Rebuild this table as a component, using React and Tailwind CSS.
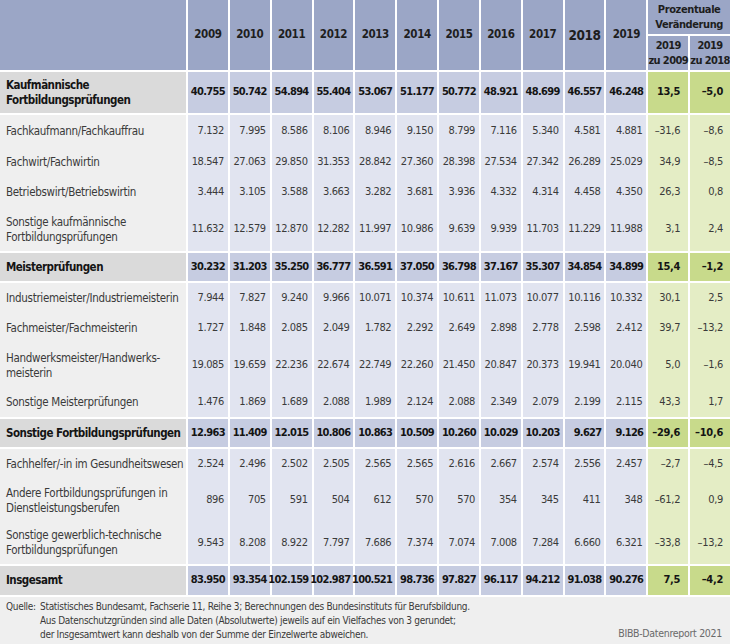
const years = ['2009', '2010', '2011', '2012', '2013', '2014', '2015', '2016', '2017', '2018', '2019'];

// kind: b = summary row, l = detail row; h = row height in px
const rows = [
  { kind: 'b', h: 'h-[41px]', label: ['Kaufmännische', 'Fortbildungsprüfungen'], values: ['40.755', '50.742', '54.894', '55.404', '53.067', '51.177', '50.772', '48.921', '48.699', '46.557', '46.248'], p1: '13,5', p2: '–5,0' },
  { kind: 'l', h: 'h-[32px]', label: ['Fachkaufmann/Fachkauffrau'], values: ['7.132', '7.995', '8.586', '8.106', '8.946', '9.150', '8.799', '7.116', '5.340', '4.581', '4.881'], p1: '–31,6', p2: '–8,6' },
  { kind: 'l', h: 'h-[30px]', label: ['Fachwirt/Fachwirtin'], values: ['18.547', '27.063', '29.850', '31.353', '28.842', '27.360', '28.398', '27.534', '27.342', '26.289', '25.029'], p1: '34,9', p2: '–8,5' },
  { kind: 'l', h: 'h-[31px]', label: ['Betriebswirt/Betriebswirtin'], values: ['3.444', '3.105', '3.588', '3.663', '3.282', '3.681', '3.936', '4.332', '4.314', '4.458', '4.350'], p1: '26,3', p2: '0,8' },
  { kind: 'l', h: 'h-[43px]', label: ['Sonstige kaufmännische', 'Fortbildungsprüfungen'], values: ['11.632', '12.579', '12.870', '12.282', '11.997', '10.986', '9.639', '9.939', '11.703', '11.229', '11.988'], p1: '3,1', p2: '2,4' },
  { kind: 'b', h: 'h-[28px]', label: ['Meisterprüfungen'], values: ['30.232', '31.203', '35.250', '36.777', '36.591', '37.050', '36.798', '37.167', '35.307', '34.854', '34.899'], p1: '15,4', p2: '–1,2' },
  { kind: 'l', h: 'h-[30px]', label: ['Industriemeister/Industriemeisterin'], values: ['7.944', '7.827', '9.240', '9.966', '10.071', '10.374', '10.611', '11.073', '10.077', '10.116', '10.332'], p1: '30,1', p2: '2,5' },
  { kind: 'l', h: 'h-[31px]', label: ['Fachmeister/Fachmeisterin'], values: ['1.727', '1.848', '2.085', '2.049', '1.782', '2.292', '2.649', '2.898', '2.778', '2.598', '2.412'], p1: '39,7', p2: '–13,2' },
  { kind: 'l', h: 'h-[43px]', label: ['Handwerksmeister/Handwerks-', 'meisterin'], values: ['19.085', '19.659', '22.236', '22.674', '22.749', '22.260', '21.450', '20.847', '20.373', '19.941', '20.040'], p1: '5,0', p2: '–1,6' },
  { kind: 'l', h: 'h-[30px]', label: ['Sonstige Meisterprüfungen'], values: ['1.476', '1.869', '1.689', '2.088', '1.989', '2.124', '2.088', '2.349', '2.079', '2.199', '2.115'], p1: '43,3', p2: '1,7' },
  { kind: 'b', h: 'h-[28px]', label: ['Sonstige Fortbildungsprüfungen'], values: ['12.963', '11.409', '12.015', '10.806', '10.863', '10.509', '10.260', '10.029', '10.203', '9.627', '9.126'], p1: '–29,6', p2: '–10,6' },
  { kind: 'l', h: 'h-[30px]', label: ['Fachhelfer/-in im Gesundheitswesen'], values: ['2.524', '2.496', '2.502', '2.505', '2.565', '2.565', '2.616', '2.667', '2.574', '2.556', '2.457'], p1: '–2,7', p2: '–4,5' },
  { kind: 'l', h: 'h-[43px]', label: ['Andere Fortbildungsprüfungen in', 'Dienstleistungsberufen'], values: ['896', '705', '591', '504', '612', '570', '570', '354', '345', '411', '348'], p1: '–61,2', p2: '0,9' },
  { kind: 'l', h: 'h-[42px]', label: ['Sonstige gewerblich-technische', 'Fortbildungsprüfungen'], values: ['9.543', '8.208', '8.922', '7.797', '7.686', '7.374', '7.074', '7.008', '7.284', '6.660', '6.321'], p1: '–33,8', p2: '–13,2' },
  { kind: 'b', h: 'h-[29px]', label: ['Insgesamt'], values: ['83.950', '93.354', '102.159', '102.987', '100.521', '98.736', '97.827', '96.117', '94.212', '91.038', '90.276'], p1: '7,5', p2: '–4,2' },
];

const Row = ({ row }) => {
  const bold = row.kind === 'b';
  const green = bold ? 'bg-[#c8da8b]' : 'bg-[#e4edc5]';
  return (
    <div
      className={`grid grid-cols-[186px_repeat(13,minmax(0,1fr))] gap-x-[2px] bg-white ${row.h} ${
        bold ? 'font-bold text-[#141414] my-[2px]' : 'text-[#3a3a3a]'
      }`}
    >
      <div
        className={`flex flex-col justify-center pl-[6px] text-[11.5px] leading-[15px] whitespace-nowrap ${
          bold ? 'bg-[#dadada] tracking-[-0.5px]' : 'bg-[#efefef] tracking-[-0.3px]'
        }`}
      >
        {row.label.map((line) => (
          <span key={line}>{line}</span>
        ))}
      </div>
      {row.values.map((v, i) => (
        <div
          key={i}
          className={`flex items-center justify-end text-[11px] whitespace-nowrap ${
            bold ? 'bg-[#c6cce1] tracking-[-0.7px] pr-[3px]' : 'bg-[#e1e4f0] tracking-[-0.4px] pr-[4px]'
          }`}
        >
          {v}
        </div>
      ))}
      <div className={`flex items-center justify-end pr-[8px] text-[11px] tracking-[-0.3px] ${green}`}>{row.p1}</div>
      <div className={`flex items-center justify-end pr-[7px] text-[11px] tracking-[-0.3px] ${green}`}>{row.p2}</div>
    </div>
  );
};

export default function App() {
  return (
    <div className="w-[730px] h-[644px] bg-white font-['Liberation_Sans_Narrow','DejaVu_Sans_Condensed','Roboto_Condensed',Roboto,sans-serif] overflow-hidden">
      {/* header */}
      <div className="grid grid-cols-[186px_repeat(13,minmax(0,1fr))] grid-rows-[34px_34px] gap-[2px] bg-white font-bold text-[#1e1e1e] text-[11.5px] tracking-[-0.4px] h-[70px]">
        <div className="row-span-2 bg-[#9ba6c6]" />
        {years.map((y) => (
          <div
            key={y}
            className={`row-span-2 flex items-center justify-center bg-[#9ba6c6] ${y === '2018' ? 'text-[13.5px]' : ''}`}
          >
            {y}
          </div>
        ))}
        <div className="col-span-2 flex flex-col items-center justify-center bg-[#9ba6c6] leading-[15px] text-[11px]">
          <span>Prozentuale</span>
          <span>Veränderung</span>
        </div>
        <div className="flex flex-col items-center justify-center bg-[#9ba6c6] leading-[15px] text-[11px] tracking-[-0.6px] whitespace-nowrap">
          <span>2019</span>
          <span>zu 2009</span>
        </div>
        <div className="flex flex-col items-center justify-center bg-[#9ba6c6] leading-[15px] text-[11px] tracking-[-0.6px] whitespace-nowrap">
          <span>2019</span>
          <span>zu 2018</span>
        </div>
      </div>

      {rows.map((row, i) => (
        <Row key={i} row={row} />
      ))}

      {/* footer */}
      <div className="bg-[#efefef] h-[47px] px-[6px] pt-[3px] text-[10px] tracking-[-0.3px] leading-[14px] text-[#3a3a3a] relative">
        <div className="flex">
          <span className="w-[34px] shrink-0">Quelle:</span>
          <div className="flex flex-col">
            <span>Statistisches Bundesamt, Fachserie 11, Reihe 3; Berechnungen des Bundesinstituts für Berufsbildung.</span>
            <span>Aus Datenschutzgründen sind alle Daten (Absolutwerte) jeweils auf ein Vielfaches von 3 gerundet;</span>
            <span>der Insgesamtwert kann deshalb von der Summe der Einzelwerte abweichen.</span>
          </div>
        </div>
        <span className="absolute right-[8px] bottom-[4px] text-[10.5px] text-[#6a6a6a]">BIBB-Datenreport 2021</span>
      </div>
    </div>
  );
}
